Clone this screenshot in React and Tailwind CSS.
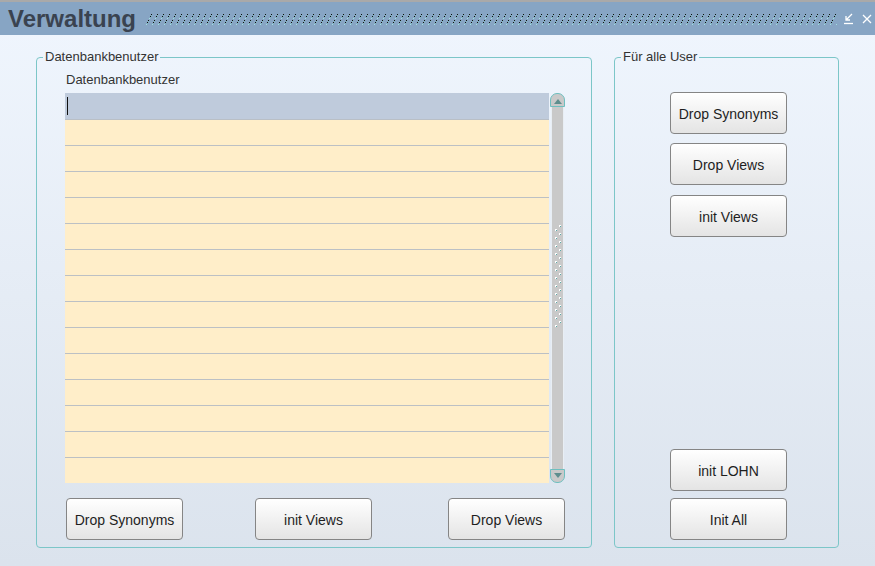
import React from "react";

const FONT = { fontFamily: '"Liberation Sans", Arial, sans-serif' };

function Btn({ children, className = "" }) {
  return (
    <button
      className={
        "w-[117px] h-[42px] shrink-0 rounded-[4px] border border-[#858585] bg-gradient-to-b from-[#ffffff] to-[#e4e4e4] text-[14px] leading-[16px] pt-[1px] text-[#1e1e1e] flex items-center justify-center " +
        className
      }
    >
      {children}
    </button>
  );
}

function TitleDots() {
  return (
    <svg width="691" height="11" className="block">
      <defs>
        <pattern id="dp" width="6" height="11" patternUnits="userSpaceOnUse">
          <rect x="5" y="0" width="1" height="1" fill="#111" />
          <rect x="4" y="2" width="1" height="1" fill="#111" />
          <rect x="3" y="4" width="1" height="1" fill="#9fe0e0" />
          <rect x="2" y="6" width="1" height="1" fill="#111" />
          <rect x="1" y="8" width="1" height="1" fill="#111" />
          <rect x="0" y="10" width="1" height="1" fill="#9fe0e0" />
          <rect x="5" y="1" width="1" height="1" fill="#7fbcc0" />
          <rect x="4" y="3" width="1" height="1" fill="#7fbcc0" />
          <rect x="2" y="7" width="1" height="1" fill="#7fbcc0" />
          <rect x="1" y="9" width="1" height="1" fill="#7fbcc0" />
        </pattern>
      </defs>
      <rect width="691" height="11" fill="url(#dp)" />
    </svg>
  );
}

function ScrollGrip() {
  const dots = [];
  for (let i = 0; i < 13; i++) {
    dots.push(
      <g key={"a" + i}>
        <rect x="5" y={i * 8} width="2" height="2" fill="#ffffff" />
        <rect x="6" y={i * 8 + 1} width="1" height="1" fill="#5aa8a8" />
      </g>
    );
    dots.push(
      <g key={"b" + i}>
        <rect x="1" y={i * 8 + 4} width="2" height="2" fill="#ffffff" />
        <rect x="2" y={i * 8 + 5} width="1" height="1" fill="#5aa8a8" />
      </g>
    );
  }
  return (
    <svg width="8" height="104" className="block">
      {dots}
    </svg>
  );
}

export default function App() {
  const rows = Array.from({ length: 14 });
  return (
    <div
      className="w-[875px] h-[566px] flex flex-col overflow-hidden bg-gradient-to-b from-[#f0f6fe] to-[#dbe3ed]"
      style={FONT}
    >
      {/* title bar */}
      <div className="h-[35px] shrink-0 border-t-2 border-[#a9a9a9] bg-[#87a5c4] flex items-center">
        <div className="ml-[8px] text-[24px] leading-[28px] font-bold text-[#3a4350]">Verwaltung</div>
        <div className="ml-[10px] mt-[1px]">
          <TitleDots />
        </div>
        <div className="ml-[7px] flex items-center gap-[8px]">
          <svg width="10" height="12" className="block">
            <path d="M8 1 L2 7 M2 3 L2 7 L6 7" stroke="#fff" strokeWidth="1.3" fill="none" />
            <path d="M0 10.5 H9" stroke="#fff" strokeWidth="1.3" />
          </svg>
          <svg width="10" height="10" className="block">
            <path d="M1 1 L9 9 M9 1 L1 9" stroke="#fff" strokeWidth="1.3" />
          </svg>
        </div>
      </div>

      {/* body */}
      <div className="flex pl-[36px] pt-[15px]">
        {/* left group */}
        <fieldset className="m-0 p-0 min-w-0 w-[556px] h-[498px] border border-[#7cc6c8] rounded-[4px] flex flex-col">
          <legend className="ml-[6px] px-[2px] text-[13px] leading-[14px] text-[#333]">Datenbankbenutzer</legend>
          <div className="pl-[29px] pt-[9px] text-[13px] leading-[14px] text-[#333]">Datenbankbenutzer</div>
          <div className="ml-[28px] mt-[6px] flex">
            <div className="w-[484px] h-[390px] flex flex-col">
              <div className="h-[27px] shrink-0 bg-[#bfcbdc] border-b border-[#b9bfc6] flex items-center">
                <div className="ml-[2px] w-[1px] h-[18px] bg-[#111]" />
              </div>
              {rows.map((_, i) => (
                <div
                  key={i}
                  className={
                    (i === 13 ? "h-[25px] " : "h-[26px] border-b border-[#bcc0c4] ") + "shrink-0 bg-[#ffeec9]"
                  }
                />
              ))}
            </div>
            <div className="ml-[1px] w-[15px] h-[390px] flex flex-col">
              <div className="h-[14px] rounded-t-[7px] border border-[#6ebfbf] bg-[#c9c9c9] flex items-center justify-center">
                <svg width="8" height="5" className="block mt-[2px]">
                  <path d="M4 0 L8 5 L0 5 Z" fill="#5e8e8e" />
                </svg>
              </div>
              <div className="flex-1 mx-[1px] bg-[#c9c9c9] border-x border-[#e8eef4] flex items-start justify-center">
                <div className="mt-[118px]">
                  <ScrollGrip />
                </div>
              </div>
              <div className="h-[14px] rounded-b-[7px] border border-[#6ebfbf] bg-[#c9c9c9] flex items-center justify-center">
                <svg width="8" height="5" className="block mb-[2px]">
                  <path d="M0 0 L8 0 L4 5 Z" fill="#5e8e8e" />
                </svg>
              </div>
            </div>
          </div>
          <div className="ml-[29px] mt-[15px] flex">
            <Btn>Drop Synonyms</Btn>
            <Btn className="ml-[72px]">init Views</Btn>
            <Btn className="ml-[76px]">Drop Views</Btn>
          </div>
        </fieldset>

        {/* right group */}
        <fieldset className="m-0 p-0 min-w-0 ml-[22px] w-[225px] h-[498px] border border-[#7cc6c8] rounded-[4px] flex flex-col">
          <legend className="ml-[6px] px-[2px] text-[13px] leading-[14px] text-[#333]">Für alle User</legend>
          <div className="pl-[55px] pt-[28px] flex flex-col">
            <Btn>Drop Synonyms</Btn>
            <Btn className="mt-[9px]">Drop Views</Btn>
            <Btn className="mt-[10px]">init Views</Btn>
            <Btn className="mt-[212px]">init LOHN</Btn>
            <Btn className="mt-[7px]">Init All</Btn>
          </div>
        </fieldset>
      </div>
    </div>
  );
}
